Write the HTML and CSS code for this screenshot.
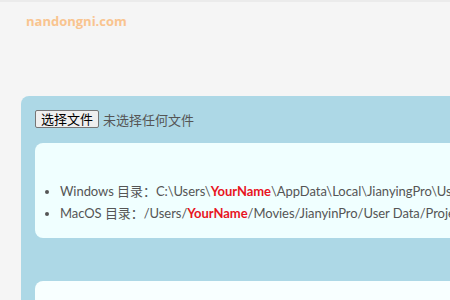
FILE: index.html
```html
<!DOCTYPE html>
<html lang="zh-CN">
<head>
    <meta charset="UTF-8">
    <meta name="viewport" content="width=device-width, initial-scale=1.0">
    <title>剪映草稿目录</title>
    <link rel="stylesheet" href="styles.css">
</head>
<body>
    <div class="top-bar">
        <span class="watermark">nandongni.com</span>
    </div>

    <div class="panel">
        <div class="file-row">
            <button class="file-btn">选择文件</button>
            <span class="file-name">未选择任何文件</span>
        </div>

        <div class="card">
            <ul class="paths">
                <li>Windows 目录：C:\Users\<span class="user">YourName</span>\AppData\Local\JianyingPro\User Data\Projects\com.lveditor.draft</li>
                <li>MacOS 目录：/Users/<span class="user">YourName</span>/Movies/JianyinPro/User Data/Projects/com.lveditor.draft</li>
            </ul>
        </div>

        <div class="card card-result"></div>
    </div>
</body>
</html>
```

FILE: styles.css
```css
body {
    margin: 0;
    background-color: #f5f5f5;
    font-family: Lato, "Noto Sans CJK SC", sans-serif;
    color: #555;
    overflow: hidden;
}

.top-bar {
    height: 96px;
    border-top: 2px solid #ebebeb;
    box-sizing: border-box;
    padding: 8px 0 0 26px;
}

.watermark {
    color: #f9c48f;
    font-weight: bold;
    font-size: 13px;
    font-family: "Open Sans", sans-serif;
}

.panel {
    margin-left: 21px;
    background-color: #add8e6;
    border-radius: 8px 0 0 0;
    padding: 13px 0 0 14px;
    white-space: nowrap;
}

.file-row {
    display: flex;
    align-items: center;
    gap: 4px;
    height: 20px;
    font-family: "Noto Sans CJK SC", sans-serif;
    font-size: 13px;
}

.file-btn {
    font-family: "Noto Sans CJK SC", sans-serif;
    font-size: 13px;
    line-height: 14px;
    padding: 1px 5px;
    background: #efefef;
    border: 1px solid #767676;
    border-radius: 2px;
    color: #000;
}

.file-name {
    color: #555;
}

.card {
    margin-top: 14px;
    background-color: #f0ffff;
    border-radius: 8px 0 0 8px;
    padding: 37px 0 14px 0;
}

.paths {
    margin: 0;
    padding-left: 25px;
    font-size: 13px;
    line-height: 22px;
}

.paths li {
    letter-spacing: -0.05px;
}

.user {
    color: #e8141e;
    font-weight: bold;
}

.card-result {
    margin-top: 43px;
    height: 40px;
    padding: 0;
    background-color: #f8ffff;
}
```
